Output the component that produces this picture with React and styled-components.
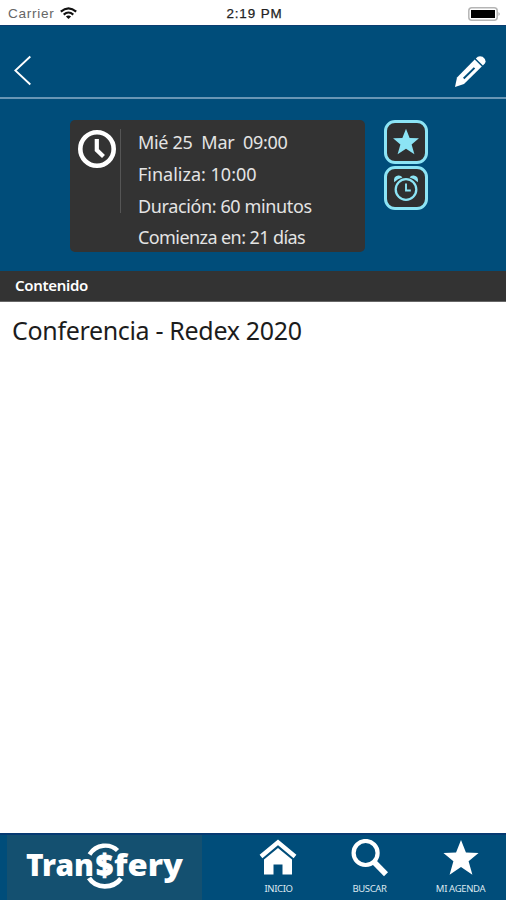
import React from "react";
import styled, { createGlobalStyle } from "styled-components";

const GlobalStyle = createGlobalStyle`
  body {
    margin: 0;
    background: #fff;
    font-family: "Noto Sans", "Open Sans", sans-serif;
  }
  svg {
    display: block;
  }
`;

const Screen = styled.div`
  display: flex;
  flex-direction: column;
  width: 506px;
  height: 900px;
  overflow: hidden;
  background: #fff;
`;

const StatusBar = styled.div`
  display: grid;
  grid-template-columns: 1fr auto 1fr;
  align-items: center;
  box-sizing: border-box;
  height: 25px;
  padding: 2px 5px 0 8px;
  font-family: "Liberation Sans", sans-serif;
  color: #222;
`;

const Carrier = styled.div`
  display: flex;
  align-items: center;
  gap: 6px;
  font-size: 13.6px;
  letter-spacing: 0.7px;
  color: #666;
`;

const Clock = styled.div`
  font-size: 13.4px;
  letter-spacing: 0.9px;
  -webkit-text-stroke: 0.25px #222;
`;

const Battery = styled.div`
  justify-self: end;
`;

const Header = styled.div`
  display: flex;
  justify-content: space-between;
  box-sizing: border-box;
  height: 74px;
  padding: 29px 20px 0 14px;
  background: #004d7a;
  border-top: 1px solid #0c3d70;
  border-bottom: 2px solid #6896b5;
`;

const Info = styled.div`
  display: flex;
  align-items: flex-start;
  box-sizing: border-box;
  height: 172px;
  padding: 21px 0 0 70px;
  background: #004d7a;
`;

const Card = styled.div`
  display: flex;
  box-sizing: border-box;
  width: 295px;
  height: 132px;
  padding: 9px 0 0 8px;
  border-radius: 5px;
  background: #333;
`;

const Divider = styled.div`
  width: 1px;
  height: 84px;
  margin: 0 17px 0 4px;
  background: #555;
`;

const Line = styled.div`
  height: 31.8px;
  line-height: 27px;
  font-size: 18px;
  letter-spacing: ${props => props.$spacing || "0"};
  white-space: pre;
  color: #e4e4e4;
`;

const Actions = styled.div`
  display: grid;
  gap: 2px;
  margin-left: 19px;
`;

const ActionButton = styled.div`
  display: flex;
  align-items: center;
  justify-content: center;
  box-sizing: border-box;
  width: 44px;
  height: 44px;
  border: 3px solid #8ce4f5;
  border-radius: 11px;
  background: #2f2f30;
`;

const SectionBar = styled.div`
  box-sizing: border-box;
  height: 31px;
  padding-left: 15px;
  line-height: 29px;
  font-size: 15px;
  font-weight: 600;
  letter-spacing: -0.3px;
  color: #fff;
  background: #333;
  border-bottom: 1px solid #666;
`;

const Content = styled.div`
  flex: 1;
  padding: 11px 0 0 12px;
  line-height: 35px;
  font-size: 25px;
  letter-spacing: -0.33px;
  color: #1c1c1c;
`;

const Footer = styled.div`
  display: flex;
  box-sizing: border-box;
  height: 67px;
  padding-left: 7px;
  background: #004d7a;
  border-top: 2px solid #063a72;
`;

const Logo = styled.div`
  width: 195px;
  margin-right: 31px;
  background: #145070;
`;

const Tab = styled.div`
  display: flex;
  flex-direction: column;
  align-items: center;
  width: 91px;
  padding-top: 4px;
  font-size: 9.5px;
  line-height: 12px;
  letter-spacing: -0.35px;
  color: #dce8f0;
`;

const TabIcon = styled.div`
  height: 44px;
`;

const starPoints =
  "20,1 25.2,14.2 38.5,14.7 28,23.4 32,37.5 20,29.6 8,37.5 12,23.4 1.5,14.7 14.8,14.2";

function Star(props) {
  return (
    <svg width={props.size} height={props.size} viewBox="0 0 40 40">
      <polygon points={starPoints} fill={props.color} />
    </svg>
  );
}

function WifiIcon() {
  return (
    <svg width="17" height="13" viewBox="0 0 17 13" fill="none" stroke="#111" strokeWidth="2.1">
      <path d="M0.8 4.6Q8.5 -2 16.2 4.6" />
      <path d="M3.7 7.6Q8.5 3.4 13.3 7.6" />
      <path d="M8.5 12L5.9 9.6Q8.5 7.6 11.1 9.6Z" fill="#111" stroke="none" />
    </svg>
  );
}

function BatteryIcon() {
  return (
    <svg width="33" height="14" viewBox="0 0 33 14">
      <rect x="0.8" y="0.8" width="28.4" height="12.4" rx="3" fill="#fff" stroke="#b5b5b5" strokeWidth="1.5" />
      <rect x="3" y="3" width="24" height="8" fill="#000" />
      <path d="M30.5 5Q33 7 30.5 9Z" fill="#aaa" />
    </svg>
  );
}

function BackIcon() {
  return (
    <svg width="18" height="31" viewBox="0 0 18 31">
      <path d="M16.3 1.5L1.3 15.5L16.3 29.5" fill="none" stroke="#fff" strokeWidth="1.9" />
    </svg>
  );
}

function PencilIcon() {
  return (
    <svg width="32" height="32" viewBox="0 0 32 32">
      <path d="M1 32L3 22.5L20.7 4.5L27.8 11.5L10 29Z" fill="#fff" />
      <path d="M21.8 3.4Q24.5 .2 28.6 1.8Q33 5 30.8 8.5L28.9 10.4Z" fill="#fff" />
      <path d="M9 22.8L19.8 12.2L21.2 13.6L10.4 24.2Z" fill="#004d7a" />
    </svg>
  );
}

function ClockIcon() {
  return (
    <svg width="38" height="40" viewBox="0 0 38 40" fill="none" stroke="#fff">
      <circle cx="19" cy="20" r="16.7" strokeWidth="4.6" />
      <path d="M18.8 10V21L25.5 27.5" strokeWidth="4.2" />
    </svg>
  );
}

function AlarmIcon() {
  return (
    <svg width="26" height="28" viewBox="0 0 26 28" fill="none" stroke="#8ce4f5">
      <circle cx="13" cy="15.5" r="10.3" strokeWidth="2.3" />
      <path d="M13 9.5V16.5H17.8" strokeWidth="1.9" />
      <path d="M1.2 8.3Q0 2.4 5.2 1.6Q8.2 1.3 9.4 3.4Q4.7 4.5 1.2 8.3Z" fill="#8ce4f5" stroke="none" />
      <path d="M24.8 8.3Q26 2.4 20.8 1.6Q17.8 1.3 16.6 3.4Q21.3 4.5 24.8 8.3Z" fill="#8ce4f5" stroke="none" />
    </svg>
  );
}

function HomeIcon() {
  return (
    <svg width="40" height="36" viewBox="0 0 40 36">
      <path d="M2 17.5L19 3.4L36 17.5" fill="none" stroke="#fff" strokeWidth="4.4" />
      <path d="M5 20.5L19 9L33 20.5V35.5H23.5V25.5H14.5V35.5H5Z" fill="#fff" />
    </svg>
  );
}

function SearchIcon() {
  return (
    <svg width="38" height="38" viewBox="0 0 38 38" fill="none" stroke="#fff">
      <circle cx="14.6" cy="14" r="12" strokeWidth="4.2" />
      <path d="M23 23L35 35.3" strokeWidth="5.6" />
    </svg>
  );
}

function TransferyLogo() {
  return (
    <svg
      width="195"
      height="65"
      viewBox="0 0 195 65"
      fill="#fff"
      fontFamily="Noto Sans, sans-serif"
      fontWeight="900"
    >
      <text x="19" y="40.5" fontSize="30" textLength="68" lengthAdjust="spacingAndGlyphs">Tran</text>
      <text x="89" y="41" fontSize="30" textLength="17" lengthAdjust="spacingAndGlyphs" stroke="#fff" strokeWidth="0.9">$</text>
      <text x="107" y="40.5" fontSize="30" textLength="69" lengthAdjust="spacingAndGlyphs">fery</text>
      <path d="M82.5 19.5C89 9 103 8 110.5 15.5" fill="none" stroke="#fff" strokeWidth="4.4" />
      <path d="M82 43C89 54 106 54 114 43.5" fill="none" stroke="#fff" strokeWidth="4.8" />
    </svg>
  );
}

function App() {
  return (
    <Screen>
      <GlobalStyle />
      <StatusBar>
        <Carrier>
          Carrier
          <WifiIcon />
        </Carrier>
        <Clock>2:19 PM</Clock>
        <Battery>
          <BatteryIcon />
        </Battery>
      </StatusBar>
      <Header>
        <BackIcon />
        <PencilIcon />
      </Header>
      <Info>
        <Card>
          <ClockIcon />
          <Divider />
          <div>
            <Line $spacing="-0.3px">{"Mié 25  Mar  09:00"}</Line>
            <Line>Finaliza: 10:00</Line>
            <Line $spacing="-0.38px">Duración: 60 minutos</Line>
            <Line $spacing="-0.58px">Comienza en: 21 días</Line>
          </div>
        </Card>
        <Actions>
          <ActionButton>
            <Star size={28} color="#8ce4f5" />
          </ActionButton>
          <ActionButton>
            <AlarmIcon />
          </ActionButton>
        </Actions>
      </Info>
      <SectionBar>Contenido</SectionBar>
      <Content>Conferencia - Redex 2020</Content>
      <Footer>
        <Logo>
          <TransferyLogo />
        </Logo>
        <Tab>
          <TabIcon>
            <HomeIcon />
          </TabIcon>
          INICIO
        </Tab>
        <Tab>
          <TabIcon>
            <SearchIcon />
          </TabIcon>
          BUSCAR
        </Tab>
        <Tab>
          <TabIcon>
            <Star size={38} color="#fff" />
          </TabIcon>
          MI AGENDA
        </Tab>
      </Footer>
    </Screen>
  );
}

export default App;
